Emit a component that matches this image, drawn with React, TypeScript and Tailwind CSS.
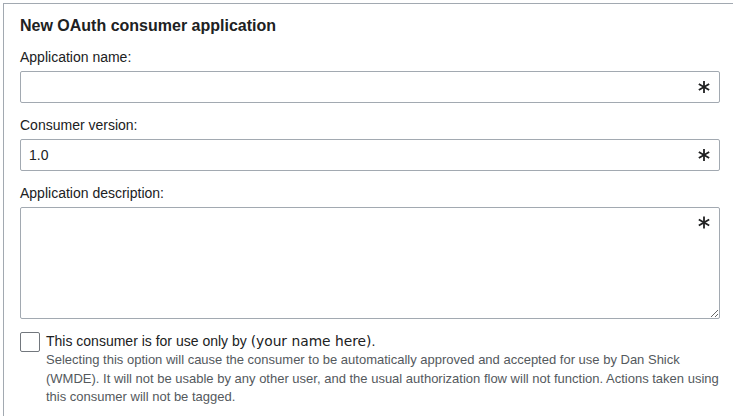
function Required({ top }: { top?: boolean }) {
  return (
    <svg
      className={
        top
          ? "pointer-events-none absolute right-[10px] top-[9px]"
          : "pointer-events-none absolute right-[10px] top-1/2 -translate-y-1/2"
      }
      width="12"
      height="13"
      viewBox="0 0 12 13"
    >
      <g stroke="#202122" strokeWidth="1.8">
        <line x1="6" y1="0.5" x2="6" y2="12.5" />
        <line x1="0.8" y1="3.5" x2="11.2" y2="9.5" />
        <line x1="0.8" y1="9.5" x2="11.2" y2="3.5" />
      </g>
    </svg>
  );
}

function TextField({ label, value, first }: { label: string; value?: string; first?: boolean }) {
  return (
    <div className={first ? "mt-[11px]" : "mt-3"}>
      <label className="block text-[14px] leading-5 text-[#202122]">{label}</label>
      <div className="relative mt-1">
        <input
          type="text"
          defaultValue={value}
          className="block h-8 w-full rounded-[2px] border border-[#a2a9b1] bg-white pl-2 pr-8 text-[14px] text-[#202122] outline-none"
        />
        <Required />
      </div>
    </div>
  );
}

export default function App() {
  return (
    <div className="min-h-screen overflow-hidden bg-white pl-[3px] pt-[3px]" style={{ fontFamily: '"Liberation Sans", Arial, sans-serif' }}>
      <div className="h-[420px] border-l border-t border-[#a2a9b1] pl-4 pr-[13px] pt-3">
        <h2 className="text-[16px] font-bold leading-5 text-[#202122]">New OAuth consumer application</h2>

        <TextField label="Application name:" first />
        <TextField label="Consumer version:" value="1.0" />

        <div className="mt-3">
          <label className="block text-[14px] leading-5 text-[#202122]">Application description:</label>
          <div className="relative mt-1">
            <textarea className="block h-[112px] w-full resize-y rounded-[2px] border border-[#a2a9b1] bg-white px-2 py-1 text-[14px] text-[#202122] outline-none" />
            <Required top />
          </div>
        </div>

        <div className="mt-3 flex items-start">
          <span className="mt-px block h-5 w-5 shrink-0 rounded-[2px] border border-[#72777d] bg-white" />
          <div className="ml-[6px]">
            <div className="text-[14px] leading-5 text-[#202122]">
              This consumer is for use only by{" "}
              <span style={{ fontFamily: '"DejaVu Sans", sans-serif' }} className="text-[13.8px]">(your name here)</span>.
            </div>
            <p className="text-[13px] leading-[18.6px] text-[#54595d]">
              Selecting this option will cause the consumer to be automatically approved and accepted for use by Dan Shick (WMDE). It will not be usable by any other user, and the usual authorization flow will not function. Actions taken using this consumer will not be tagged.
            </p>
          </div>
        </div>
      </div>
    </div>
  );
}
